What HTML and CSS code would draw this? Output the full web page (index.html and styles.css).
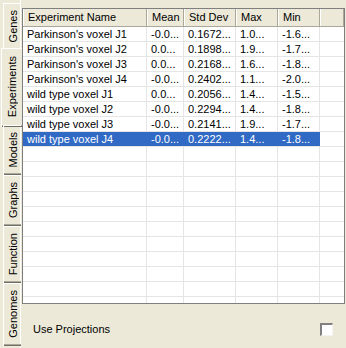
FILE: index.html
```html
<!DOCTYPE html>
<html>
<head>
<meta charset="utf-8">
<link rel="stylesheet" href="styles.css">
</head>
<body>
<div class="window">
  <div class="tabs">
    <div class="tab"><span class="tab-label">Genes</span></div>
    <div class="tab tab-selected"><span class="tab-label">Experiments</span></div>
    <div class="tab"><span class="tab-label">Models</span></div>
    <div class="tab"><span class="tab-label">Graphs</span></div>
    <div class="tab"><span class="tab-label">Function</span></div>
    <div class="tab"><span class="tab-label">Genomes</span></div>
  </div>
  <div class="page">
    <div class="list">
      <div class="row header">
        <div class="cell">Experiment Name</div>
        <div class="cell">Mean</div>
        <div class="cell">Std Dev</div>
        <div class="cell">Max</div>
        <div class="cell">Min</div>
        <div class="cell filler"></div>
      </div>
      <div class="row"><div class="cell">Parkinson's voxel J1</div><div class="cell">-0.0...</div><div class="cell">0.1672...</div><div class="cell">1.0...</div><div class="cell">-1.6...</div><div class="cell filler"></div></div>
      <div class="row"><div class="cell">Parkinson's voxel J2</div><div class="cell">0.0...</div><div class="cell">0.1898...</div><div class="cell">1.9...</div><div class="cell">-1.7...</div><div class="cell filler"></div></div>
      <div class="row"><div class="cell">Parkinson's voxel J3</div><div class="cell">0.0...</div><div class="cell">0.2168...</div><div class="cell">1.6...</div><div class="cell">-1.8...</div><div class="cell filler"></div></div>
      <div class="row"><div class="cell">Parkinson's voxel J4</div><div class="cell">-0.0...</div><div class="cell">0.2402...</div><div class="cell">1.1...</div><div class="cell">-2.0...</div><div class="cell filler"></div></div>
      <div class="row"><div class="cell">wild type voxel J1</div><div class="cell">0.0...</div><div class="cell">0.2056...</div><div class="cell">1.4...</div><div class="cell">-1.5...</div><div class="cell filler"></div></div>
      <div class="row"><div class="cell">wild type voxel J2</div><div class="cell">-0.0...</div><div class="cell">0.2294...</div><div class="cell">1.4...</div><div class="cell">-1.8...</div><div class="cell filler"></div></div>
      <div class="row"><div class="cell">wild type voxel J3</div><div class="cell">-0.0...</div><div class="cell">0.2141...</div><div class="cell">1.9...</div><div class="cell">-1.7...</div><div class="cell filler"></div></div>
      <div class="row selected"><div class="cell">wild type voxel J4</div><div class="cell">-0.0...</div><div class="cell">0.2222...</div><div class="cell">1.4...</div><div class="cell">-1.8...</div><div class="cell filler"></div></div>
      <div class="row"><div class="cell"></div><div class="cell"></div><div class="cell"></div><div class="cell"></div><div class="cell"></div><div class="cell filler"></div></div>
      <div class="row"><div class="cell"></div><div class="cell"></div><div class="cell"></div><div class="cell"></div><div class="cell"></div><div class="cell filler"></div></div>
      <div class="row"><div class="cell"></div><div class="cell"></div><div class="cell"></div><div class="cell"></div><div class="cell"></div><div class="cell filler"></div></div>
      <div class="row"><div class="cell"></div><div class="cell"></div><div class="cell"></div><div class="cell"></div><div class="cell"></div><div class="cell filler"></div></div>
      <div class="row"><div class="cell"></div><div class="cell"></div><div class="cell"></div><div class="cell"></div><div class="cell"></div><div class="cell filler"></div></div>
      <div class="row"><div class="cell"></div><div class="cell"></div><div class="cell"></div><div class="cell"></div><div class="cell"></div><div class="cell filler"></div></div>
      <div class="row"><div class="cell"></div><div class="cell"></div><div class="cell"></div><div class="cell"></div><div class="cell"></div><div class="cell filler"></div></div>
      <div class="row"><div class="cell"></div><div class="cell"></div><div class="cell"></div><div class="cell"></div><div class="cell"></div><div class="cell filler"></div></div>
      <div class="row"><div class="cell"></div><div class="cell"></div><div class="cell"></div><div class="cell"></div><div class="cell"></div><div class="cell filler"></div></div>
      <div class="row"><div class="cell"></div><div class="cell"></div><div class="cell"></div><div class="cell"></div><div class="cell"></div><div class="cell filler"></div></div>
      <div class="row"><div class="cell"></div><div class="cell"></div><div class="cell"></div><div class="cell"></div><div class="cell"></div><div class="cell filler"></div></div>
    </div>
    <div class="footer">
      <span class="footer-label">Use Projections</span>
      <span class="checkbox"></span>
    </div>
  </div>
</div>
</body>
</html>
```
FILE: styles.css
```css
html, body {
  margin: 0;
  padding: 0;
  background: #ece9d8;
}
body {
  font-family: "Liberation Sans", Arial, sans-serif;
  font-size: 11px;
  color: #000;
}
.window {
  display: flex;
  width: 346px;
  height: 348px;
  overflow: hidden;
}
.tabs {
  width: 20px;
  flex: none;
  display: flex;
  flex-direction: column;
  padding-top: 3px;
  position: relative;
  z-index: 1;
}
.tab {
  margin-left: 3px;
  width: 17px;
  padding: 6px 0 8px;
  display: flex;
  justify-content: center;
  border-left: 1px solid #fff;
  border-top: 1px solid #fff;
  box-shadow: inset 0 -1px #716f64, inset 0 -2px #aca899;
  box-sizing: content-box;
}
.tab-selected {
  margin-left: 1px;
  width: 20px;
  padding: 7px 0 9px;
  margin-top: -2px;
  margin-bottom: -2px;
  background: #ece9d8;
}
.tab-label {
  writing-mode: vertical-rl;
  transform: rotate(180deg);
  white-space: nowrap;
  line-height: 14px;
}
.page {
  flex: 1;
  display: flex;
  flex-direction: column;
  border-left: 1px solid #fff;
  padding: 8px 1px 0 1px;
  min-width: 0;
}
.list {
  height: 296px;
  box-sizing: border-box;
  border: 1px solid #7f7f7f;
  background: #fff;
  overflow: hidden;
  flex: none;
}
.row {
  display: grid;
  grid-template-columns: 124px 37px 52px 42px 42px 1fr;
  height: 15px;
  box-sizing: border-box;
  border-bottom: 1px solid #e5e5e5;
  line-height: 14px;
}
.cell {
  border-right: 1px solid #e5e5e5;
  padding-left: 4px;
  white-space: nowrap;
  overflow: hidden;
}
.row .filler {
  border-right: none;
}
.header {
  height: 18px;
  line-height: 17px;
  background: #ece9d8;
  border-bottom: 1px solid #aca899;
}
.header .cell {
  border-right: 1px solid #aca899;
  box-shadow: inset 1px 0 #fff;
  padding-left: 5px;
}
.selected .cell {
  background: #316ac5;
  color: #fff;
  border-right-color: #316ac5;
}
.selected .filler {
  background: #fff;
}
.footer {
  flex: 1;
  display: flex;
  align-items: center;
  justify-content: space-between;
  padding: 6px 12px 0 11px;
}
.footer-label {
  line-height: 14px;
}
.checkbox {
  width: 13px;
  height: 13px;
  box-sizing: border-box;
  background: #fff;
  border-top: 2px solid #808080;
  border-left: 2px solid #808080;
  border-right: 1px solid #f4f3ee;
  border-bottom: 1px solid #f4f3ee;
}
```
